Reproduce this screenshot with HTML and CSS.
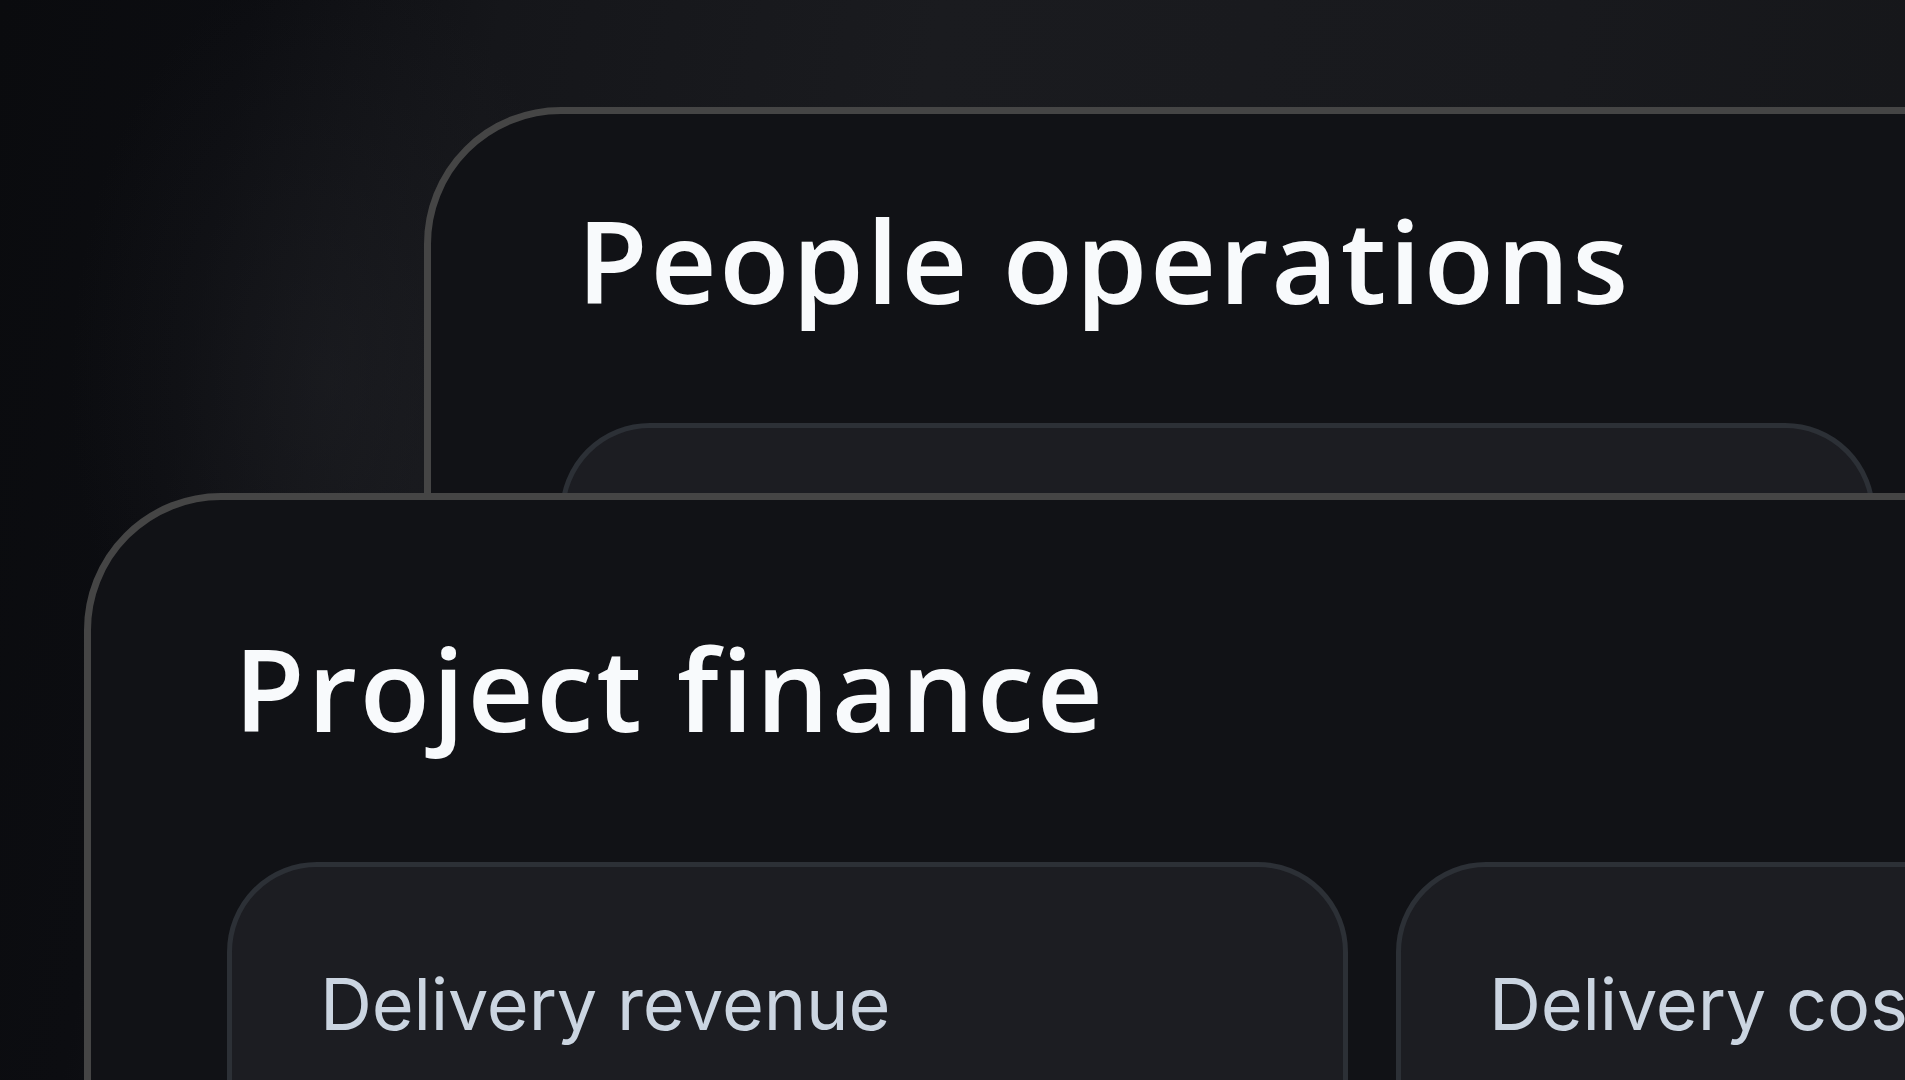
FILE: index.html
```html
<!DOCTYPE html>
<html lang="en">
<head>
    <meta charset="UTF-8">
    <meta name="viewport" content="width=device-width, initial-scale=1.0">
    <title>Workspaces</title>
    <link rel="stylesheet" href="styles.css">
</head>
<body>
    <div class="stack">
        <section class="card card-back">
            <h2 class="card-title">People operations</h2>
            <div class="panels">
                <div class="panel panel-wide"></div>
            </div>
        </section>

        <section class="card card-front">
            <h2 class="card-title">Project finance</h2>
            <div class="panels">
                <div class="panel">
                    <div class="panel-label">Delivery revenue</div>
                </div>
                <div class="panel">
                    <div class="panel-label">Delivery cost</div>
                </div>
            </div>
        </section>
    </div>
</body>
</html>
```

FILE: styles.css
```css
html, body {
    margin: 0;
    padding: 0;
    height: 100%;
}

body {
    overflow: hidden;
    background:
        radial-gradient(ellipse 260px 420px at 330px 380px, rgba(40, 41, 46, 0.35), rgba(40, 41, 46, 0) 100%),
        linear-gradient(100deg, #0a0b0e 0%, #0c0d11 12%, #15161a 24%, #1a1b1f 45%, #18191d 75%, #151619 100%);
    font-family: 'Inter', 'Noto Sans', sans-serif;
}

.stack {
    display: grid;
    align-items: start;
    justify-items: start;
}

.card {
    grid-area: 1 / 1;
    box-sizing: border-box;
    background: #111216;
    border: 7px solid #454545;
    border-radius: 137px;
}

.card-back {
    margin: 107px 0 0 424px;
    width: 1760px;
    height: 900px;
    padding: 88px 0 0 129px;
}

.card-back .card-title {
    margin-left: 17px;
}

.card-front {
    margin: 493px 0 0 84px;
    width: 2200px;
    height: 1000px;
    padding: 130px 0 0 136px;
}

.card-front .card-title {
    margin-left: 7px;
}

.card-title {
    margin: 0;
    font-family: 'Open Sans', 'Noto Sans', sans-serif;
    font-weight: 600;
    font-size: 115px;
    line-height: 1;
    letter-spacing: 2.7px;
    color: #f8fafc;
    white-space: nowrap;
    font-variant-ligatures: none;
}

.card-back .panels {
    margin-top: 106px;
}

.card-front .panels {
    margin-top: 117px;
}

.panels {
    display: flex;
    gap: 48px;
}

.panel {
    box-sizing: border-box;
    flex: 0 0 1121px;
    height: 420px;
    background: #1c1d22;
    border: 5px solid #2c3036;
    border-radius: 90px;
    padding: 101px 0 0 88px;
}

.panel-wide {
    flex-basis: 1315px;
}

.panel-label {
    font-family: 'Inter', 'Noto Sans', sans-serif;
    font-size: 72px;
    line-height: 1;
    letter-spacing: -0.2px;
    color: #cbd5e1;
    white-space: nowrap;
}
```
